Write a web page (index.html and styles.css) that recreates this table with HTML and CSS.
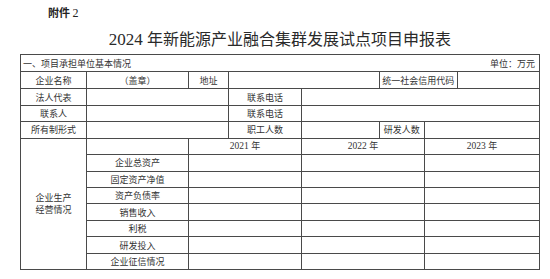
FILE: index.html
```html
<!DOCTYPE html>
<html lang="zh-CN">
<head>
<meta charset="utf-8">
<title>2024 年新能源产业融合集群发展试点项目申报表</title>
<link rel="stylesheet" href="styles.css">
</head>
<body>
<div class="page">
  <div class="attach">附件 <span class="num">2</span></div>
  <h1 class="title"><span class="num">2024 </span>年新能源产业融合集群发展试点项目申报表</h1>
  <table class="form">
    <colgroup>
      <col class="c1"><col class="c2"><col class="c3"><col class="c4">
      <col class="c5"><col class="c6"><col class="c7"><col class="c8">
    </colgroup>
    <tr class="r-tall">
      <td colspan="8" class="section"><div class="section-in"><span>一、项目承担单位基本情况</span><span>单位：万元</span></div></td>
    </tr>
    <tr class="r-tall">
      <td>企业名称</td>
      <td>（盖章）</td>
      <td>地址</td>
      <td colspan="2"></td>
      <td colspan="2">统一社会信用代码</td>
      <td></td>
    </tr>
    <tr>
      <td>法人代表</td>
      <td colspan="2"></td>
      <td>联系电话</td>
      <td colspan="4"></td>
    </tr>
    <tr>
      <td>联系人</td>
      <td colspan="2"></td>
      <td>联系电话</td>
      <td colspan="4"></td>
    </tr>
    <tr>
      <td>所有制形式</td>
      <td colspan="2"></td>
      <td>职工人数</td>
      <td></td>
      <td>研发人数</td>
      <td colspan="2"></td>
    </tr>
    <tr>
      <td rowspan="8" class="group">企业生产<br>经营情况</td>
      <td></td>
      <td colspan="2"><span class="num">2021 </span>年</td>
      <td colspan="2"><span class="num">2022 </span>年</td>
      <td colspan="2"><span class="num">2023 </span>年</td>
    </tr>
    <tr><td>企业总资产</td><td colspan="2"></td><td colspan="2"></td><td colspan="2"></td></tr>
    <tr><td>固定资产净值</td><td colspan="2"></td><td colspan="2"></td><td colspan="2"></td></tr>
    <tr><td>资产负债率</td><td colspan="2"></td><td colspan="2"></td><td colspan="2"></td></tr>
    <tr><td>销售收入</td><td colspan="2"></td><td colspan="2"></td><td colspan="2"></td></tr>
    <tr><td>利税</td><td colspan="2"></td><td colspan="2"></td><td colspan="2"></td></tr>
    <tr><td>研发投入</td><td colspan="2"></td><td colspan="2"></td><td colspan="2"></td></tr>
    <tr><td>企业征信情况</td><td colspan="2"></td><td colspan="2"></td><td colspan="2"></td></tr>
  </table>
</div>
</body>
</html>
```
FILE: styles.css
```css
html, body {
  margin: 0;
  padding: 0;
  background: #ffffff;
}
body {
  font-family: "Noto Sans CJK SC", "Noto Sans", sans-serif;
  color: #333;
}
.page {
  padding-top: 4px;
  padding-left: 20px;
  width: 520px;
}
.num {
  font-family: "Liberation Serif", "Noto Sans CJK SC", serif;
}
.attach {
  margin-left: 28px;
  font-size: 11px;
  line-height: 16px;
  font-weight: 700;
  color: #222;
}
.attach .num {
  font-weight: 400;
  font-size: 12px;
}
.title {
  margin: 7px 0 4px 0;
  text-align: center;
  font-size: 16px;
  line-height: 20px;
  font-weight: 400;
  color: #2a2a2a;
}
.title .num {
  font-size: 17px;
}
.form {
  border-collapse: collapse;
  table-layout: fixed;
  width: 520px;
  font-size: 9px;
  color: #333;
}
.form col.c1 { width: 66px; }
.form col.c2 { width: 102px; }
.form col.c3 { width: 40px; }
.form col.c4 { width: 73px; }
.form col.c5 { width: 77.5px; }
.form col.c6 { width: 45.5px; }
.form col.c7 { width: 33px; }
.form col.c8 { width: 82px; }
.form tr {
  height: 16.45px;
}
.form tr.r-tall {
  height: 17.2px;
}
.form td {
  border: 1px solid #4a4a4a;
  padding: 0;
  text-align: center;
  vertical-align: middle;
  line-height: 11px;
  white-space: nowrap;
  overflow: hidden;
}
.form td .num {
  font-size: 9.5px;
}
.form td.section {
  text-align: left;
}
.section-in {
  display: flex;
  justify-content: space-between;
  padding: 0 4px 0 2px;
}
.form td.group {
  line-height: 11.5px;
}
```
